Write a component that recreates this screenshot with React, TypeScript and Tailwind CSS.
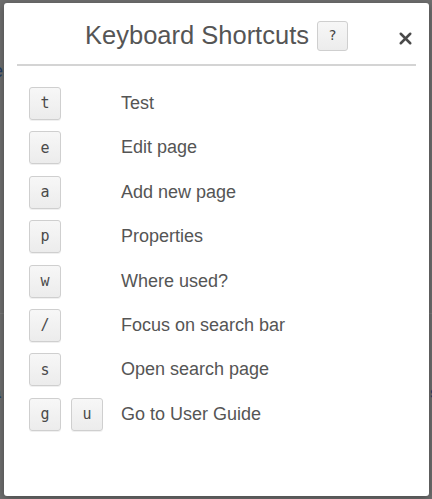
import { X } from 'lucide-react'

const SHORTCUTS: { keys: string[]; label: string }[] = [
  { keys: ['t'], label: 'Test' },
  { keys: ['e'], label: 'Edit page' },
  { keys: ['a'], label: 'Add new page' },
  { keys: ['p'], label: 'Properties' },
  { keys: ['w'], label: 'Where used?' },
  { keys: ['/'], label: 'Focus on search bar' },
  { keys: ['s'], label: 'Open search page' },
  { keys: ['g', 'u'], label: 'Go to User Guide' },
]

function Key({ children }: { children: React.ReactNode }) {
  return (
    <kbd className="flex h-[33px] w-[32px] items-center justify-center rounded-[3px] border border-[#cfcfcf] bg-gradient-to-b from-[#f7f7f7] to-[#ececec] text-[15px] text-[#4a4a4a] shadow-[0_1px_0_rgba(0,0,0,0.06)] [font-family:'DejaVu_Sans_Mono',monospace]">
      {children}
    </kbd>
  )
}

export default function App() {
  return (
    <div className="relative h-[499px] w-[432px] overflow-hidden bg-[#6f6f6f] [font-family:'Liberation_Sans',Arial,sans-serif]">
      {/* page behind the overlay */}
      <div className="absolute inset-x-0 top-[313px] h-px bg-[#7a7a7a]" />
      <span className="absolute left-[-7px] top-[58px] text-[18px] text-[#253f66]">e</span>
      <span className="absolute left-[-8px] top-[381px] text-[16px] font-bold text-[#253f66]">a</span>
      <span className="absolute right-[-7px] top-[381px] text-[16px] font-bold text-[#253f66]">s</span>

      {/* dialog */}
      <div className="relative ml-[4px] mt-[3px] flex h-[493px] w-[425px] flex-col rounded-[3px] bg-white shadow-[0_2px_8px_rgba(0,0,0,0.35)]">
        <div className="relative mx-[13px] flex h-[63px] items-center justify-center border-b-2 border-[#d4d4d4] pt-[4px]">
          <h2 className="text-[25.5px] leading-none text-[#555]">Keyboard Shortcuts</h2>
          <span className="ml-[8px] flex h-[30px] w-[31px] items-center justify-center rounded-[3px] border border-[#cfcfcf] bg-gradient-to-b from-[#f7f7f7] to-[#ececec] text-[14px] text-[#444] [font-family:'DejaVu_Sans_Mono',monospace]">
            ?
          </span>
          <button className="absolute right-[1px] top-[26px] text-[#4a4a4a]">
            <X size={19} strokeWidth={3.2} />
          </button>
        </div>

        <ul className="mt-[21px] flex flex-col gap-[11.4px] pl-[25px]">
          {SHORTCUTS.map(s => (
            <li key={s.label} className="flex items-center">
              <div className="flex w-[92px] gap-[10px]">
                {s.keys.map(k => (
                  <Key key={k}>{k}</Key>
                ))}
              </div>
              <span className="text-[18px] text-[#555]">{s.label}</span>
            </li>
          ))}
        </ul>
      </div>
    </div>
  )
}
